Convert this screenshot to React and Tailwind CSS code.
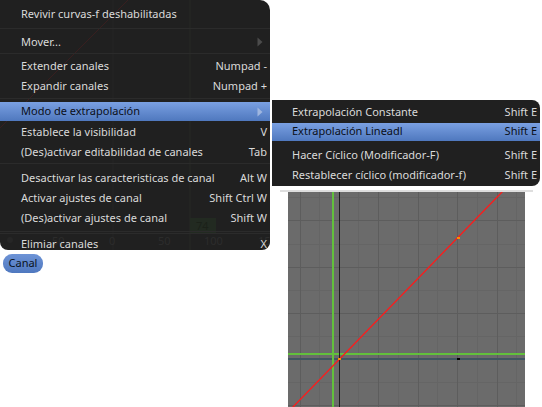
import React from "react";

const font = { fontFamily: '"Noto Sans", "Open Sans", sans-serif' };

function Arrow({ light }) {
  return (
    <svg width="6" height="10" viewBox="0 0 6 10" className="shrink-0">
      <path d="M0.5 0.5 L5.5 5 L0.5 9.5 Z" fill={light ? "#9fb6df" : "#4b4b4b"} />
    </svg>
  );
}

function Row({ label, shortcut, arrow, active, h = "h-[20px]" }) {
  return (
    <div
      className={`${h} flex items-center pl-[21px] pr-[3px] ${
        active
          ? "bg-gradient-to-b from-[#7aa0e2] to-[#4f78be] text-[#0b0f18]"
          : "text-[#dadada]"
      }`}
    >
      <span className="flex-1 whitespace-nowrap">{label}</span>
      {shortcut && <span className="whitespace-nowrap">{shortcut}</span>}
      {arrow && (
        <span className="pr-[4px] flex items-center">
          <Arrow light={active} />
        </span>
      )}
    </div>
  );
}

function Sep({ h, line }) {
  return (
    <div className={`${h} flex flex-col`}>
      <div className={line} />
      <div className="h-px bg-[#2b2b2b]" />
    </div>
  );
}

function Ghost() {
  return (
    <svg
      width="270"
      height="250"
      viewBox="0 0 270 250"
      className="absolute left-0 top-0 pointer-events-none"
    >
      <line x1="128" y1="0" x2="0" y2="128" stroke="#381f1f" strokeWidth="1" />
      <line x1="113" y1="0" x2="113" y2="250" stroke="#252525" strokeWidth="1" />
      <line x1="190" y1="0" x2="190" y2="250" stroke="#262825" strokeWidth="1" />
      <rect x="190" y="218" width="26" height="15" fill="#222a21" />
      <text x="196" y="230" fontSize="11" fill="#1b2119" fontFamily="Noto Sans">74</text>
      <line x1="0" y1="233.5" x2="270" y2="233.5" stroke="#2b2b2b" strokeWidth="1" />
      <circle cx="10" cy="240" r="3" fill="#262626" />
      <text x="52" y="245" fontSize="11" fill="#2c2c2c" fontFamily="Noto Sans">50</text>
      <text x="109" y="245" fontSize="11" fill="#2c2c2c" fontFamily="Noto Sans">0</text>
      <text x="158" y="245" fontSize="11" fill="#2c2c2c" fontFamily="Noto Sans">50</text>
      <text x="204" y="245" fontSize="11" fill="#2c2c2c" fontFamily="Noto Sans">100</text>
      <text x="258" y="245" fontSize="11" fill="#2c2c2c" fontFamily="Noto Sans">15</text>
    </svg>
  );
}

function Graph() {
  const vMajor = [12, 51, 90, 130, 169, 209];
  const vMinor = [31, 70, 110, 149, 189, 228];
  const hMajor = [28, 75, 121, 213];
  const hMinor = [5, 52, 98, 144, 190];
  return (
    <svg width="237" height="215" viewBox="0 0 237 215" className="block">
      <rect width="237" height="215" fill="#6b6b6b" />
      {vMinor.map((x) => (
        <line key={"vm" + x} x1={x + 0.5} y1="0" x2={x + 0.5} y2="215" stroke="#656565" />
      ))}
      {hMinor.map((y) => (
        <line key={"hm" + y} x1="0" y1={y + 0.5} x2="237" y2={y + 0.5} stroke="#656565" />
      ))}
      {vMajor.map((x) => (
        <line key={"v" + x} x1={x + 0.5} y1="0" x2={x + 0.5} y2="215" stroke="#5d5d5d" />
      ))}
      {hMajor.map((y) => (
        <line key={"h" + y} x1="0" y1={y + 0.5} x2="237" y2={y + 0.5} stroke="#5d5d5d" />
      ))}
      <rect x="0" y="166" width="237" height="2" fill="#405660" />
      <rect x="44" y="0" width="2" height="215" fill="#62c03c" />
      <rect x="0" y="161" width="237" height="2" fill="#62c03c" />
      <rect x="51" y="0" width="1" height="215" fill="#1c1c1c" />
      <line x1="4" y1="216" x2="216" y2="-2" stroke="#ff1a1a" strokeWidth="1.3" />
      <rect x="50" y="166" width="3" height="2" fill="#ff8a00" />
      <rect x="169" y="45" width="3" height="2" fill="#ff8a00" />
      <rect x="169" y="166" width="3" height="2" fill="#000" />
    </svg>
  );
}

function SubRow({ label, h, active }) {
  return (
    <div
      className={`${h} flex items-center pl-[20px] pr-[3px] ${
        active ? "bg-gradient-to-b from-[#7aa0e2] to-[#4f78be] text-[#0b0f18]" : ""
      }`}
    >
      <span className="flex-1 whitespace-nowrap">{label}</span>
      <span className="whitespace-nowrap">Shift E</span>
    </div>
  );
}

export default function App() {
  return (
    <div className="relative w-[542px] h-[407px] bg-white overflow-hidden text-[11px]" style={font}>
      <div className="flex h-full">
        <div className="w-[280px] pt-[254px] pl-[3px]">
          <div className="w-[40px] h-[19px] rounded-[9px] bg-gradient-to-b from-[#6d93d6] to-[#4f78bf] text-[#0a1220] flex items-center justify-center">
            Canal
          </div>
        </div>
        <div className="pt-[190px] flex flex-col">
          <div className="w-[253px] h-[2px] bg-[#dedede]" />
          <div className="pl-[8px]">
            <Graph />
          </div>
        </div>
      </div>

      {/* main menu */}
      <div className="absolute left-0 top-0 w-[270px] h-[250px] bg-[#202020] rounded-tr-[10px] rounded-b-[8px] overflow-hidden">
        <Ghost />
        <div className="relative flex flex-col pt-[4px]">
          <Row label="Revivir curvas-f deshabilitadas" />
          <Sep h="h-[8px]" line="h-[4px]" />
          <Row label="Mover..." arrow />
          <Sep h="h-[4px]" line="h-[1px]" />
          <Row label="Extender canales" shortcut="Numpad -" />
          <Row label="Expandir canales" shortcut="Numpad +" />
          <Sep h="h-[6px]" line="h-[2px]" />
          <Row label="Modo de extrapolación" arrow active h="h-[19px]" />
          <div className="h-px" />
          <Row label="Establece la visibilidad" shortcut="V" />
          <Row label="(Des)activar editabilidad de canales" shortcut="Tab" />
          <Sep h="h-[6px]" line="h-[1px]" />
          <Row label="Desactivar las caracteristicas de canal" shortcut="Alt W" />
          <Row label="Activar ajustes de canal" shortcut="Shift Ctrl W" />
          <Row label="(Des)activar ajustes de canal" shortcut="Shift W" />
          <Sep h="h-[6px]" line="h-[3px]" />
          <Row label="Elimiar canales" shortcut="X" />
        </div>
      </div>

      {/* submenu */}
      <div className="absolute left-[272px] top-[100px] w-[268px] h-[86px] bg-[#202020] rounded-r-[8px] overflow-hidden flex flex-col pt-[1px] text-[#dadada]">
        <SubRow label="Extrapolación Constante" h="h-[23px]" />
        <SubRow label="Extrapolación Lineadl" h="h-[19px]" active />
        <div className="h-[4px] shrink-0" />
        <SubRow label="Hacer Cíclico (Modificador-F)" h="h-[22px]" />
        <SubRow label="Restablecer cíclico (modificador-f)" h="h-[22px]" />
      </div>
    </div>
  );
}
